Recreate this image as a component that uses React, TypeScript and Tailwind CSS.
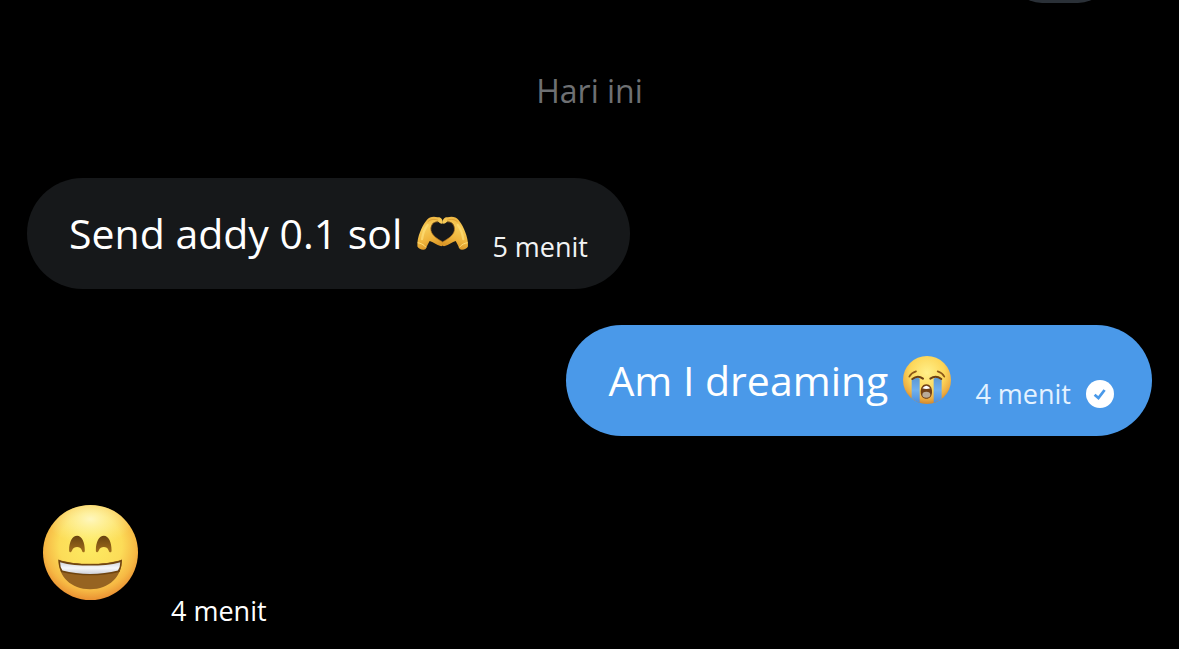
import React from 'react'
import clsx from 'clsx'

const HeartHands = () => (
    <svg viewBox="20 34 154 106" className="w-[51px] h-[35px] shrink-0" role="img" aria-label="Heart hands">
        <defs>
            <linearGradient id="hand" x1="0" y1="0" x2="0.3" y2="1">
                <stop offset="0" stopColor="#e8a632" />
                <stop offset="0.4" stopColor="#f7cc58" />
                <stop offset="0.75" stopColor="#efb43c" />
                <stop offset="1" stopColor="#dc9828" />
            </linearGradient>
            <g id="half">
                <path
                    d="M21 114C24 86 40 56 50 45C56 37 70 34 82 38C92 36 98 44 98 56C94 60 88 55 83 51C69 50 59 62 62 78C65 93 82 104 97 112C101 118 99 127 91 125C80 123 68 112 58 110C54 117 50 126 46 134C38 139 24 133 21 126Z"
                    fill="url(#hand)"
                />
                <path d="M83 52C70 50 60 62 62 78C65 93 82 104 97 112" fill="none" stroke="#b8751b" strokeWidth="2" />
                <path d="M52 52C60 44 72 42 84 47" fill="none" stroke="#d08e25" strokeWidth="2" />
                <path d="M35 104C38 84 45 70 52 61" fill="none" stroke="#ffdf78" strokeWidth="7" strokeLinecap="round" opacity="0.7" />
                <path d="M22 115C30 116 40 120 47 129" fill="none" stroke="#ffe07b" strokeWidth="3" />
            </g>
        </defs>
        <use href="#half" />
        <use href="#half" transform="translate(195 0) scale(-1 1)" />
    </svg>
)

const CryingFace = () => (
    <svg viewBox="34 20 144 144" className="w-12 h-12 shrink-0" role="img" aria-label="Loudly crying face">
        <defs>
            <radialGradient id="cryFace" cx="0.5" cy="0.35" r="0.66">
                <stop offset="0" stopColor="#fff08a" />
                <stop offset="0.55" stopColor="#fdd75a" />
                <stop offset="0.82" stopColor="#eeae42" />
                <stop offset="1" stopColor="#cf842c" />
            </radialGradient>
            <linearGradient id="tear" x1="0" y1="0" x2="0" y2="1">
                <stop offset="0" stopColor="#5c97d2" />
                <stop offset="0.5" stopColor="#70b0ee" />
                <stop offset="1" stopColor="#4a8ee0" />
            </linearGradient>
        </defs>
        <circle cx="106" cy="92" r="72" fill="url(#cryFace)" />
        <path d="M60 88Q72 80 84 88V161Q70 156 60 147Z" fill="url(#tear)" />
        <path d="M126 88Q138 80 150 88V148Q139 157 126 161Z" fill="url(#tear)" />
        <path d="M53 82Q59 70 73 66M158 82Q152 70 138 66" fill="none" stroke="#8c5718" strokeWidth="5" strokeLinecap="round" />
        <path d="M62 89Q78 76 94 88M116 88Q132 76 149 89" fill="none" stroke="#6e4112" strokeWidth="6" strokeLinecap="round" />
        <path d="M104 105C115 105 121 115 121 127C121 141 114 148 104 148C94 148 87 141 87 127C87 115 93 105 104 105Z" fill="#704016" />
        <path d="M92 117Q104 101 116 117Q104 121 92 117Z" fill="#fff" />
        <ellipse cx="104" cy="136" rx="12" ry="9" fill="#b9aa98" />
    </svg>
)

const GrinningFace = () => (
    <svg viewBox="40 30 284 284" className="w-[95px] h-[95px] shrink-0" role="img" aria-label="Grinning face with smiling eyes">
        <defs>
            <radialGradient id="grinFace" cx="0.5" cy="0.42" r="0.6">
                <stop offset="0" stopColor="#fdec62" />
                <stop offset="0.55" stopColor="#fcdc58" />
                <stop offset="0.8" stopColor="#f6b944" />
                <stop offset="1" stopColor="#e8892f" />
            </radialGradient>
            <radialGradient id="shine">
                <stop offset="0" stopColor="#fffbd0" stopOpacity="0.85" />
                <stop offset="0.5" stopColor="#fff8b0" stopOpacity="0.5" />
                <stop offset="1" stopColor="#fff59a" stopOpacity="0" />
            </radialGradient>
            <linearGradient id="teeth" x1="0" y1="0" x2="0" y2="1">
                <stop offset="0" stopColor="#d2d5dc" />
                <stop offset="0.5" stopColor="#f6f7fa" />
                <stop offset="1" stopColor="#cfd2da" />
            </linearGradient>
            <linearGradient id="eye" x1="0" y1="0" x2="0" y2="1">
                <stop offset="0" stopColor="#684210" />
                <stop offset="1" stopColor="#a36f1c" />
            </linearGradient>
            <clipPath id="faceEdge">
                <circle cx="182" cy="172" r="142" />
            </clipPath>
        </defs>
        <circle cx="182" cy="172" r="142" fill="url(#grinFace)" />
        <ellipse cx="182" cy="72" rx="130" ry="78" fill="url(#shine)" clipPath="url(#faceEdge)" />
        <path d="M118 166C118 140 128 122 142 122C156 122 165 142 165 166C165 174 158 173 156 165C152 152 132 152 127 165C124 173 118 173 118 166Z" fill="url(#eye)" />
        <path d="M198 166C198 140 208 122 222 122C236 122 245 142 245 166C245 174 238 173 236 165C232 152 212 152 207 165C204 173 198 173 198 166Z" fill="url(#eye)" />
        <path d="M86 193C112 203 148 206 181 206C214 206 250 203 276 193C276 244 238 282 181 282C124 282 86 244 86 193Z" fill="#966321" />
        <path d="M86 194C112 204 148 207 181 207C214 207 250 204 276 194Q276 212 269 230C240 237 210 240 181 240C152 240 122 237 94 230Q86 212 86 194Z" fill="#70450f" />
        <path d="M91 201C118 209 150 211 181 211C212 211 244 209 271 201Q271 215 264 226C238 233 210 236 181 236C152 236 124 233 98 226Q91 215 91 201Z" fill="url(#teeth)" />
    </svg>
)

const SentCheck = () => (
    <svg viewBox="0 0 28 28" className="w-7 h-7 shrink-0" role="img" aria-label="Terkirim">
        <circle cx="14" cy="14" r="14" fill="#fff" />
        <path d="M8.6 14.8L12.4 18L18.6 10" fill="none" stroke="#4a99e9" strokeWidth="2.8" />
    </svg>
)

interface MessageBubbleProps {
    text: string
    time: string
    emoji: React.ReactNode
    own?: boolean
}

const MessageBubble = ({ text, time, emoji, own }: MessageBubbleProps) => {
    return (
        <li
            className={clsx(
                'flex items-start gap-6 rounded-full pt-[27px] pb-6 pl-[42px] text-white',
                own ? 'self-end bg-[#4a99e9] pr-[38px]' : 'self-start bg-[#16181a] pr-[42px]'
            )}
        >
            <p className="flex items-center gap-[15px] text-[41px] leading-[56px] whitespace-nowrap">
                {text}
                {emoji}
            </p>
            <div className={clsx('mt-6 flex items-center gap-[15px]', own ? 'text-[#e4f2ff]' : 'text-[#f2f3f4]')}>
                <time className="text-[27px] leading-9 whitespace-nowrap">{time}</time>
                {own && <SentCheck />}
            </div>
        </li>
    )
}

const App = () => {
    return (
        <main className="min-h-screen bg-black font-['Open_Sans',sans-serif]">
            {/* tail of the button scrolled above the list */}
            <div className="flex h-[3px] items-end justify-end overflow-hidden pr-[69px]">
                <div className="h-16 w-[100px] shrink-0 rounded-full bg-[#2a3037]" />
            </div>
            <h2 className="pt-[66px] text-center text-[32px] leading-[44px] text-[#6e7073]">Hari ini</h2>
            <ul className="mt-[65px] flex flex-col gap-9 px-[27px]">
                <MessageBubble text="Send addy 0.1 sol" time="5 menit" emoji={<HeartHands />} />
                <MessageBubble text="Am I dreaming" time="4 menit" emoji={<CryingFace />} own />
                <li className="mt-[33px] flex items-start gap-[33px] pl-4 text-white">
                    <GrinningFace />
                    <time className="mt-[88px] text-[27px] leading-9">4 menit</time>
                </li>
            </ul>
        </main>
    )
}

export default App
